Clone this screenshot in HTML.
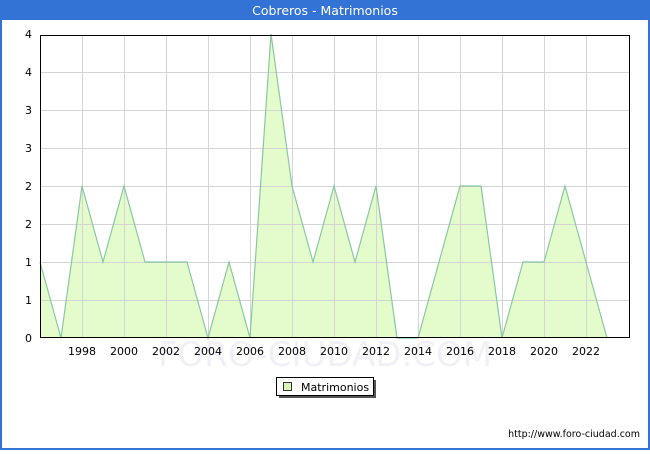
<!DOCTYPE html>
<html><head><style>
body{margin:0;width:650px;height:450px;overflow:hidden;font-family:"DejaVu Sans","Liberation Sans",sans-serif;}
</style></head><body>
<svg width="650" height="450" xmlns="http://www.w3.org/2000/svg" font-family="DejaVu Sans, Liberation Sans, sans-serif">
<rect x="0" y="0" width="650" height="450" fill="#3473d6"/>
<rect x="2" y="20" width="646" height="428" fill="#fff"/>
<text x="325" y="15" fill="#fff" font-size="12.5" text-anchor="middle">Cobreros - Matrimonios</text>
<text x="325" y="366" fill="#f0f0f6" font-size="34" text-anchor="middle">FORO-CIUDAD.COM</text>
<polygon fill="#e4fccc" points="40,338 40,262 61,338 82,186 103,262 124,186 145,262 166,262 187,262 208,338 229,262 250,338 271,34 292,186 313,262 334,186 355,262 376,186 397,338 418,338 439,262 460,186 481,186 502,338 523,262 544,262 565,186 586,262 607,338"/>
<g stroke="#d4d4d4" stroke-width="1">
<line x1="40" y1="300.5" x2="630" y2="300.5"/><line x1="40" y1="262.5" x2="630" y2="262.5"/><line x1="40" y1="224.5" x2="630" y2="224.5"/><line x1="40" y1="186.5" x2="630" y2="186.5"/><line x1="40" y1="148.5" x2="630" y2="148.5"/><line x1="40" y1="110.5" x2="630" y2="110.5"/><line x1="40" y1="72.5" x2="630" y2="72.5"/>
<line x1="82.5" y1="35" x2="82.5" y2="338"/><line x1="124.5" y1="35" x2="124.5" y2="338"/><line x1="166.5" y1="35" x2="166.5" y2="338"/><line x1="208.5" y1="35" x2="208.5" y2="338"/><line x1="250.5" y1="35" x2="250.5" y2="338"/><line x1="292.5" y1="35" x2="292.5" y2="338"/><line x1="334.5" y1="35" x2="334.5" y2="338"/><line x1="376.5" y1="35" x2="376.5" y2="338"/><line x1="418.5" y1="35" x2="418.5" y2="338"/><line x1="460.5" y1="35" x2="460.5" y2="338"/><line x1="502.5" y1="35" x2="502.5" y2="338"/><line x1="544.5" y1="35" x2="544.5" y2="338"/><line x1="586.5" y1="35" x2="586.5" y2="338"/>
</g>
<polyline fill="none" stroke="#88c8a0" stroke-width="1.2" points="40,262 61,338 82,186 103,262 124,186 145,262 166,262 187,262 208,338 229,262 250,338 271,34 292,186 313,262 334,186 355,262 376,186 397,338 418,338 439,262 460,186 481,186 502,338 523,262 544,262 565,186 586,262 607,338"/>
<rect x="40.5" y="35.5" width="589" height="302" fill="none" stroke="#000" stroke-width="1"/>
<g font-size="11" fill="#000" text-anchor="end">
<text x="32" y="342">0</text><text x="32" y="304">1</text><text x="32" y="266">1</text><text x="32" y="228">2</text><text x="32" y="190">2</text><text x="32" y="152">3</text><text x="32" y="114">3</text><text x="32" y="76">4</text><text x="32" y="38">4</text>
</g>
<g font-size="11" fill="#000" text-anchor="middle">
<text x="82" y="355">1998</text><text x="124" y="355">2000</text><text x="166" y="355">2002</text><text x="208" y="355">2004</text><text x="250" y="355">2006</text><text x="292" y="355">2008</text><text x="334" y="355">2010</text><text x="376" y="355">2012</text><text x="418" y="355">2014</text><text x="460" y="355">2016</text><text x="502" y="355">2018</text><text x="544" y="355">2020</text><text x="586" y="355">2022</text>
</g>
<rect x="279" y="380" width="97" height="18" fill="#555"/>
<rect x="276.5" y="377.5" width="97" height="18" fill="#fff" stroke="#000"/>
<rect x="283.5" y="382.5" width="8" height="8" fill="#d8f8b8" stroke="#333"/>
<text x="301" y="391" font-size="11">Matrimonios</text>
<text x="640" y="437" font-size="9.5" text-anchor="end">http://www.foro-ciudad.com</text>
</svg>
</body></html>
